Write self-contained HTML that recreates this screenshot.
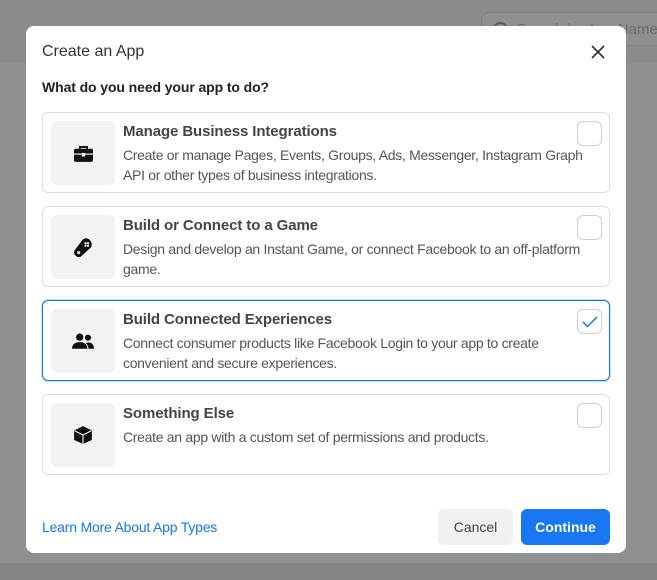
<!DOCTYPE html>
<html><head><style>
*{box-sizing:border-box;margin:0;padding:0}
body{width:657px;height:580px;overflow:hidden;background:#8f9092;font-family:"Liberation Sans",Arial,sans-serif;position:relative}
.hdr{position:absolute;left:0;top:0;width:657px;height:62px;background:#8a8b8d;border-bottom:1px solid #858688}
.srch{position:absolute;left:481px;top:12px;width:200px;height:34px;border:1px solid #7d7e80;border-radius:8px;background:#8e8f91;color:#6a6b6d;font-size:15px;padding:8px 0 0 34px}
.srch:before{content:"";position:absolute;left:11px;top:9px;width:11px;height:11px;border:2px solid #5a5b5d;border-radius:50%}
.bot{position:absolute;left:0;top:563px;width:657px;height:17px;background:#838486}
.modal{position:absolute;left:26px;top:26px;width:600px;height:527px;background:#fff;border-radius:8px}
.title{position:absolute;left:16px;top:17px;font-size:16px;color:#333}
.x{position:absolute;left:564px;top:18px}
.q{position:absolute;left:16px;top:53px;font-size:14px;font-weight:bold;color:#222;letter-spacing:-0.1px}
.card{position:absolute;left:16px;width:568px;height:81px;border:1px solid #dadde1;border-radius:6px}
.card.sel{border:1.5px solid #1877f2;box-shadow:0 0 0 1px #c6dcfa}
.ib{position:absolute;left:8px;top:8px;width:64px;height:64px;background:#f2f2f2;border-radius:6px;display:flex;align-items:center;justify-content:center}
.ct{position:absolute;left:80px;top:10px;font-size:15px;font-weight:bold;color:#444;letter-spacing:-0.1px}
.cd{position:absolute;left:80px;top:32px;width:480px;font-size:14px;line-height:20px;color:#555;letter-spacing:-0.3px}
.cb{position:absolute;left:534px;top:8px;width:25px;height:25px;border:1px solid #ccd0d5;border-radius:6px;display:flex;align-items:center;justify-content:center}
.link{position:absolute;left:16px;top:493px;font-size:14px;color:#1877f2;letter-spacing:-0.2px}
.btn{position:absolute;top:483px;height:36px;border-radius:6px;font-size:14px;display:flex;align-items:center;justify-content:center}
</style></head><body>
<div class="hdr"></div>
<div class="srch">Search by App Name o</div>
<div class="bot"></div>
<div class="modal">
<div class="title">Create an App</div>
<svg class="x" width="16" height="16" viewBox="0 0 16 16"><path d="M2 2L14 14M14 2L2 14" stroke="#333" stroke-width="1.6"/></svg>
<div class="q">What do you need your app to do?</div>

<div class="card" style="top:86px">
<div class="ib"><svg width="19" height="17" viewBox="0 0 16 14"><path d="M5 3V1.5h6V3" stroke="#111" stroke-width="1.6" fill="none"/><rect x="0" y="3" width="16" height="11" rx="1.5" fill="#111"/><rect x="6.5" y="6.5" width="3" height="3" fill="#f2f2f2"/><rect x="0" y="7" width="6.5" height="1" fill="#f2f2f2"/><rect x="9.5" y="7" width="6.5" height="1" fill="#f2f2f2"/></svg></div>
<div class="ct">Manage Business Integrations</div>
<div class="cd">Create or manage Pages, Events, Groups, Ads, Messenger, Instagram Graph API or other types of business integrations.</div>
<div class="cb"></div></div>

<div class="card" style="top:180px">
<div class="ib"><svg width="20" height="20" viewBox="0 0 16 16"><path d="M10 1a5 5 0 0 1 5 5c0 1.5-.7 2.5-1.7 3.3L7 15a3 3 0 0 1-4.5.3l-1-1A3 3 0 0 1 1.8 10L7 3a4.5 4.5 0 0 1 3-2z" fill="#111"/><circle cx="10" cy="5" r=".9" fill="#f2f2f2"/><circle cx="12" cy="5" r=".9" fill="#f2f2f2"/><circle cx="10" cy="7" r=".9" fill="#f2f2f2"/><circle cx="12" cy="7" r=".9" fill="#f2f2f2"/><path d="M3.5 11.5l2 2M5.5 11.5l-2 2" stroke="#f2f2f2" stroke-width="1"/></svg></div>
<div class="ct">Build or Connect to a Game</div>
<div class="cd">Design and develop an Instant Game, or connect Facebook to an off-platform game.</div>
<div class="cb"></div></div>

<div class="card sel" style="top:274px">
<div class="ib"><svg width="22" height="16" viewBox="0 0 20 14"><circle cx="7" cy="3.5" r="3.3" fill="#111"/><path d="M0 14c0-4 3-6 7-6s7 2 7 6z" fill="#111"/><circle cx="14.5" cy="4" r="2.8" fill="#111"/><path d="M15 14c0-2-1-4-2.5-5 1-.5 2-.6 2.5-.6 3 0 5 2 5 5.6z" fill="#111"/></svg></div>
<div class="ct">Build Connected Experiences</div>
<div class="cd">Connect consumer products like Facebook Login to your app to create convenient and secure experiences.</div>
<div class="cb"><svg width="16" height="12" viewBox="0 0 16 12"><path d="M1 6l4.5 4.5L15 1" stroke="#1877f2" stroke-width="1.5" fill="none"/></svg></div></div>

<div class="card" style="top:368px">
<div class="ib"><svg width="20" height="20" viewBox="0 0 18 18"><path d="M9 1l8 4v8.5L9 17l-8-3.5V5z" fill="#111"/><path d="M1.5 5.2L9 9l7.5-3.8M9 9v8" stroke="#f2f2f2" stroke-width="1"/></svg></div>
<div class="ct">Something Else</div>
<div class="cd">Create an app with a custom set of permissions and products.</div>
<div class="cb"></div></div>

<div class="link">Learn More About App Types</div>
<div class="btn" style="left:412px;width:75px;background:#f0f0f0;color:#444">Cancel</div>
<div class="btn" style="left:495px;width:89px;background:#1877f2;color:#fff;font-weight:bold">Continue</div>
</div>
</body></html>
